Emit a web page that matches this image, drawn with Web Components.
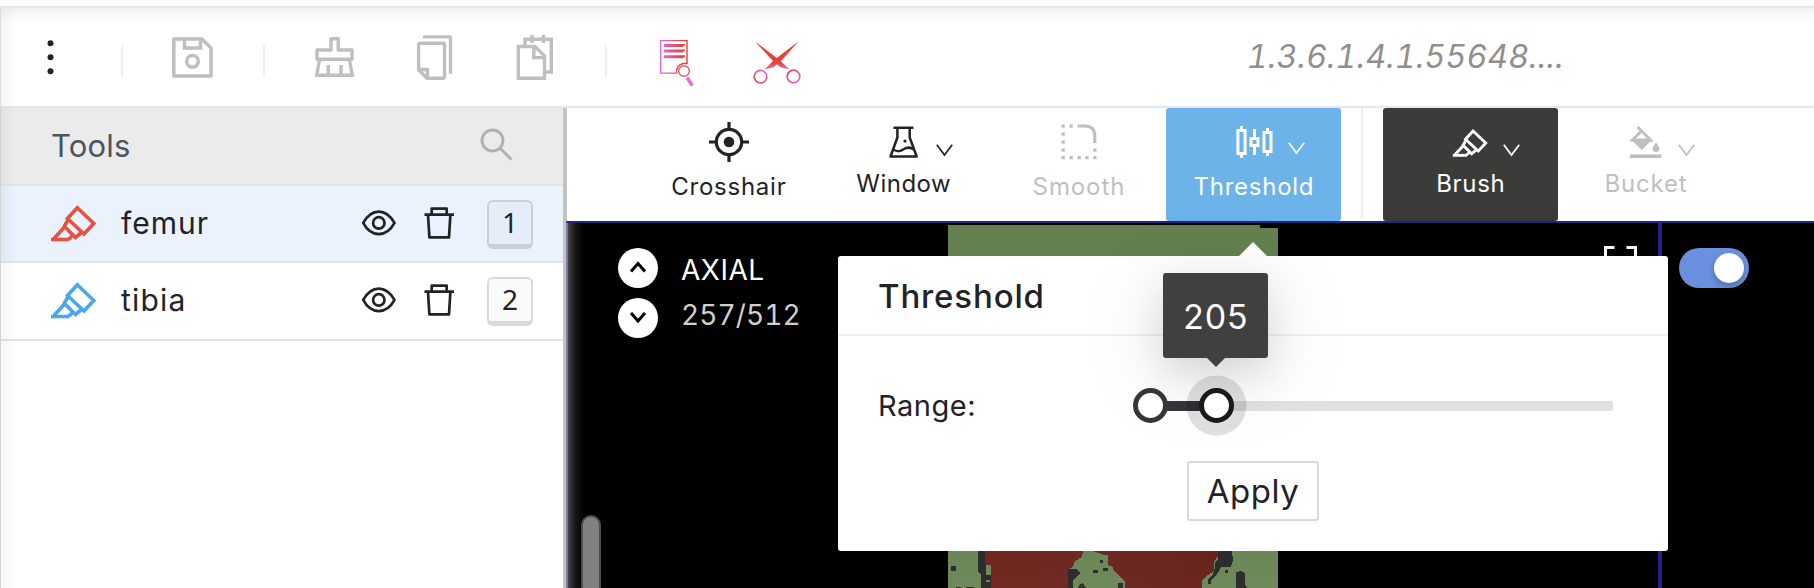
<!DOCTYPE html>
<html lang="en">
<head>
<meta charset="utf-8">
<title>Segmentation</title>
<style>
html,body{margin:0;height:588px;overflow:hidden;background:#fff}
body{font-family:Inter,"Noto Sans",sans-serif;color:#222326}
</style>
</head>
<body>
<seg-app></seg-app>
<script>
const def=(name,html,setup)=>customElements.define(name,class extends HTMLElement{
  constructor(){super();this.attachShadow({mode:'open'});}
  connectedCallback(){
    this.shadowRoot.innerHTML=typeof html==='function'?html(this):html;
    if(setup)setup(this);
  }
});

/* name: [width, height, origin x, origin y, markup] */
const pen='<path d="M77.300 207.800L93.800 223.500L84 234L67.500 218.500Z"/><path d="M68.300 219.500L64.300 226.300L75.500 237.500L81.500 232.500M64.600 227L54 238.500M72.800 235L69 239.300"/><path d="M51 239.500H69.500" />';
const icons={
  more:[8,36,47,39,'<g fill="currentColor" stroke="none"><circle cx="50.5" cy="43.300" r="3"/><circle cx="50.5" cy="57.300" r="3"/><circle cx="50.5" cy="71.300" r="3"/></g>'],
  save:[42,42,172,37,'<g stroke-width="3.500"><path d="M173.800 38.900H202L211 48V76H173.800Z" stroke-linejoin="round"/><path d="M184.500 39V48H200.500V39"/><circle cx="192.500" cy="61.300" r="5.800"/></g>'],
  clean:[42,42,314,36,'<g stroke-width="3.400"><path d="M331 50V38.800H338.200V50H352V59.300H317V50Z" stroke-linejoin="round"/><path d="M319.500 60L316.700 75.300H352.300L349.500 60M328.300 65V75M341 65V75"/></g>'],
  copy:[38,48,416,34,'<g stroke-width="3.400"><path d="M423 36.900H449A1.500 1.500 0 0 1 450.500 38.400V73.700M418.600 44.500Q418.600 43.200 420 43.200H443Q444.500 43.200 444.500 44.500V76.500Q444.500 78.200 443 78.200H427L418.600 69.800ZM419 69.500H427.400V78"/></g>'],
  paste:[40,48,515,34,'<g stroke-width="3.400"><path d="M525 46V39.300H551.300V72H545M532 35V43M543.500 35V43M518.300 46.500H535L544.500 56V78.300H518.300ZM533.800 47V57.600H544"/></g>'],
  report:[38,50,658,38,'<defs><linearGradient id="g" x1="660" x2="688" y1="0" y2="0" gradientUnits="userSpaceOnUse"><stop stop-color="#e46be0"/><stop offset=".85" stop-color="#e54136"/></linearGradient></defs><g stroke="url(#g)" stroke-width="1.400"><path d="M676.500 73.100H660.600V40.600H687V63.500H683Q676 65.500 676.500 73.500"/></g><path d="M664 45.500H683.500V45.600M664 51H683.500V51.100M664 56.800H683.500V56.900" stroke="url(#g)" stroke-width="3"/><circle cx="684" cy="71" r="5.300" stroke="#e55f74" stroke-width="1.500"/><path d="M687 77.500L692.300 85.500" stroke="#e270dc" stroke-width="3.600"/>'],
  cut:[50,46,752,40,'<defs><linearGradient id="a" x1="0" x2="0" y1="62" y2="69" gradientUnits="userSpaceOnUse"><stop stop-color="#e54136"/><stop offset="1" stop-color="#dd6fa8"/></linearGradient><linearGradient id="b" x2="1" y2="0" y1="1"><stop stop-color="#e54a36"/><stop offset="1" stop-color="#e46bd4"/></linearGradient><linearGradient id="c" y1="0" y2="1"><stop stop-color="#e54136"/><stop offset="1" stop-color="#e46bd4"/></linearGradient></defs><g fill="url(#a)" stroke="none"><path d="M755 41.500L779.500 60L789.500 69.500L780.500 67.300L772.500 60.500Z"/><path d="M798.500 41.500L774 60L764.500 69.500L773.500 67.300L781.500 60.500Z"/></g><circle cx="760.500" cy="76.700" r="6.300" stroke="url(#b)" stroke-width="1.700"/><circle cx="793.500" cy="76.500" r="6.300" stroke="url(#c)" stroke-width="1.700"/>'],
  search:[34,34,480,128,'<g stroke-width="2.800"><circle cx="492.500" cy="140.500" r="10.500"/><path d="M500.300 148.500L511.500 159.500"/></g>'],
  pen:[48,40,50,204,'<g stroke-width="3.600">'+pen+'</g>'],
  pen2:[37,30.800,50,204,'<g stroke-width="3.700">'+pen+'</g>'],
  eye:[36,28,360.500,209.600,'<g stroke-width="2.700"><path d="M362.700 223.500Q369 212.200 378.300 212.200T394 223.500Q388 234.700 378.300 234.700T362.700 223.500Z"/><circle cx="378.300" cy="223.500" r="5.700"/></g>'],
  trash:[32,34,422.500,206.300,'<g stroke-width="2.700" stroke-linejoin="round"><path d="M424 214.900H453.500M431.200 214V209H446.200V214M427.500 215L428.900 237.700H448.500L449.900 215"/></g>'],
  cross:[40,40,709,122,'<g stroke-width="3.200"><circle cx="729" cy="142" r="12.700"/><path d="M729 122V130M729 154V162M709 142H716.500M741.500 142H749"/></g><circle cx="729" cy="142" r="5.300" fill="currentColor" stroke="none"/>'],
  flask:[30,33,889,126,'<g stroke-width="2.500" stroke-linejoin="round"><path d="M893.500 127.800H913.500M897.400 128V137.500L890.500 156.500H916.700L909.700 137.500V128M893 149.500C898 152 900 151.500 904 149C908 146.500 911 147.500 914 149.500"/></g><circle cx="905" cy="141" r="1.600" fill="currentColor" stroke="none"/>'],
  smooth:[36,36,1061,124,'<path d="M1077.500 126H1085Q1094.800 126 1094.800 136V143" stroke-width="3.200"/><path fill="currentColor" stroke="none" d="M1061.500 124.500h3.300v3.300h-3.300zM1069.500 124.500h3.300v3.300h-3.300zM1061.500 132.500h3.300v3.300h-3.300zM1061.500 140.500h3.300v3.300h-3.300zM1061.500 148.500h3.300v3.300h-3.300zM1061.500 156h3.300v3.300h-3.300zM1069.500 156h3.300v3.300h-3.300zM1077.500 156h3.300v3.300h-3.300zM1085.300 156h3.300v3.300h-3.300zM1093.200 156h3.300v3.300h-3.300zM1093.200 148.500h3.300v3.300h-3.300z"/>'],
  thresh:[37,34,1235.500,125,'<g stroke-width="3"><path d="M1237.400 130.400H1244.600V153.500H1237.400ZM1241 126V130M1241 154V158M1250.500 138.500H1257.500V145.500H1250.500ZM1254 129V138M1254 146V155M1263.500 132.400H1270.500V151.500H1263.500ZM1267 128V132M1267 152V156"/></g>'],
  bucket:[32,33,1629.500,126,'<path d="M1637 127L1651.500 141.500M1641 131L1632 140H1650L1641 131" stroke-width="2.800"/><path fill="currentColor" stroke="none" d="M1630.500 139.500H1651.800L1641.300 150ZM1655.500 142.500Q1659 147 1659 149A3.500 3 0 0 1 1652 149Q1652 147 1655.500 142.500ZM1629.500 154.500H1661V158H1629.500Z"/>'],
  chev:[18,13,935.500,143.500,'<path d="M936.300 144.200L944 154.500L951.700 144.200" stroke-width="1.700"/>'],
  up:[18,14,629,261,'<path d="M631 271.500L638 263.500L645 271.500" stroke-width="3"/>'],
  down:[18,14,629,312,'<path d="M631 314L638 322L645 314" stroke-width="3"/>'],
  full:[34,34,1604,246,'<path d="M1605.500 256V247.500H1614.500M1626.500 247.500H1635.500V256M1605.500 270V278.500H1614.500M1626.500 278.500H1635.500V270" stroke-width="3"/>']
};
def('ui-icon',el=>{
  const [w,h,x,y,m]=icons[el.getAttribute('name')];
  const vb=el.getAttribute('name')==='pen2'?'50 204 48 40':`${x} ${y} ${w} ${h}`;
  return `<style>:host{display:block;width:${w}px;height:${h}px;flex:none}svg{display:block;width:100%;height:100%;overflow:visible}</style><svg viewBox="${vb}" fill="none" stroke="currentColor">${m}</svg>`;
});

def('top-bar',`<style>
:host{display:block;height:108px;box-sizing:border-box;padding-top:6px;border-bottom:2px solid #e3e8ee}
.bar{border-top:2px solid #e3e8ee;height:98px;display:grid;grid-template-columns:900px 1fr;background:linear-gradient(#f1f1f1,#f9f9f9 7px,#fff 17px)}
.icons{display:flex;color:#bfbfbf;padding-left:47px;align-items:flex-start}
.icons>*{margin-top:var(--t,29px);margin-left:var(--l,0)}
i{width:2px;height:32px;background:#f0f0f0;--t:37px}
.title{font-style:italic;font-size:32px;line-height:40px;color:#8f8f8f;letter-spacing:.13px;font-variant-numeric:tabular-nums;padding:29px 0 0 347px;white-space:nowrap}
</style><div class="bar"><div class="icons">
<ui-icon name="more" style="color:#222326;--t:31px"></ui-icon><i style="--l:66px"></i>
<ui-icon name="save" style="--l:49px"></ui-icon><i style="--l:49px"></i>
<ui-icon name="clean" style="--l:49px;--t:28px"></ui-icon>
<ui-icon name="copy" style="--l:60px;--t:26px"></ui-icon>
<ui-icon name="paste" style="--l:61px;--t:26px"></ui-icon><i style="--l:50px"></i>
<ui-icon name="report" style="--l:51px;--t:30px"></ui-icon>
<ui-icon name="cut" style="--l:56px;--t:32px"></ui-icon>
</div><div class="title">1.3.6.1.4.1.55648....</div></div>`);

def('tool-row',el=>`<style>
:host{display:flex;box-sizing:border-box;height:${el.getAttribute('h')}px;border-bottom:2px solid #e4e4e4;padding-left:49px;background:${el.hasAttribute('active')?'#eaf2fe':'#fff'}}
.pen{margin-top:18px;color:${el.getAttribute('color')}}
.name{width:240px;margin-left:23px;font-size:30px;line-height:40px;margin-top:17px;letter-spacing:${el.getAttribute('ls')}px}
.eye{margin-top:23.200px}.trash{margin:19.800px 0 0 25.500px}
kbd{margin:14px 0 0 32.500px;width:46px;height:49px;box-sizing:border-box;border:2px solid rgba(0,0,0,.13);border-bottom-width:5px;border-radius:6px;background:rgba(0,0,0,.02);font:28px/41px "Noto Sans",sans-serif;text-align:center}
</style><ui-icon class="pen" name="pen"></ui-icon><div class="name"><slot></slot></div><ui-icon class="eye" name="eye"></ui-icon><ui-icon class="trash" name="trash"></ui-icon><kbd>${el.getAttribute('key')}</kbd>`);

def('tools-panel',`<style>
:host{display:block;width:562px;position:relative;border-left:1px solid #dcdcdc;border-right:4px solid #c3c3c3}
header{display:flex;justify-content:space-between;height:76px;background:#ebebeb;border-bottom:2px solid #e4e4e4;color:#4b5563;font-size:31px;line-height:75px;padding:0 49px 0 50px;letter-spacing:.2px}
ui-icon{margin-top:20px;color:#b0b0b0}
</style><header><span>Tools</span><ui-icon name="search"></ui-icon></header>
<tool-row active h="77" color="#e5523f" key="1" ls="1">femur</tool-row><tool-row h="78" color="#4ba6ef" key="2" ls="1.2">tibia</tool-row>`);

def('tool-button',el=>{const c=el.hasAttribute('menu');const d=el.getAttribute('drop')||0;return `<style>
:host{display:flex;flex-direction:column;align-items:center;width:175px;height:113px;border-radius:3px;box-sizing:border-box}
.pic{position:relative;height:54px;display:flex;align-items:flex-start;align-self:stretch;padding-left:${el.getAttribute('x')}px}
.main{margin-top:${el.getAttribute('y')}px}
.chev{margin-top:${el.getAttribute('cy')}px;margin-left:${el.getAttribute('cx')}px}
.label{font-size:24px;line-height:30px;margin-top:${d}px;white-space:nowrap;letter-spacing:${el.getAttribute('ls')}px;margin-right:-${el.getAttribute('ls')}px}
</style><div class="pic"><ui-icon class="main" name="${el.getAttribute('icon')}"></ui-icon>${c?'<ui-icon class="chev" name="chev"></ui-icon>':''}</div><div class="label"><slot></slot></div>`});

def('tool-strip',`<style>
:host{display:flex;height:113px;padding-left:74px;background:#fff}
.off{color:#bfbfbf}.blue{background:#6cb3e9;color:#fff}.dark{background:#3b3b39;color:#fff}
i{width:2px;height:110px;background:#eee;margin:0 20px}
</style>
<tool-button icon="cross" x="68" y="14" drop="10" ls=".75">Crosshair</tool-button>
<tool-button icon="flask" x="73" y="18" menu cx="17" cy="35.5" drop="7" ls=".5">Window</tool-button>
<tool-button class="off" icon="smooth" x="70" y="16" drop="10" ls=".9">Smooth</tool-button>
<tool-button class="blue" icon="thresh" x="69.500" y="17" menu cx="15" cy="33.5" drop="10" ls=".75">Threshold</tool-button><i></i>
<tool-button class="dark" icon="pen2" x="69" y="20" menu cx="13.5" cy="35.5" drop="7" ls=".7">Brush</tool-button>
<tool-button class="off" icon="bucket" x="71.500" y="18" menu cx="16" cy="35.5" drop="7" ls=".8">Bucket</tool-button>`);

def('scan-image',`<style>:host{display:block;width:330px;height:363px}svg{display:block}</style>
<svg width="330" height="363" viewBox="948 225 330 363" shape-rendering="crispEdges">
<defs><linearGradient id="g" x2="0" y2="1"><stop stop-color="#66824f"/><stop offset="1" stop-color="#718d5d"/></linearGradient><linearGradient id="r" x2="1" y2="0"><stop stop-color="#762a22"/><stop offset=".4" stop-color="#732b25"/><stop offset="1" stop-color="#6c261f"/></linearGradient></defs>
<path fill="url(#g)" d="M948 225H1260V228H1278V588H948Z"/>
<path fill="url(#r)" d="M985 540H1218V556L1214 562V571L1208 575L1202 580V588H1125V582L1121 577L1113 570V567L1108 565V555H1104L1098 553L1093 551H1083L1082 557L1075 561L1073 567L1068 570V588H991V565H985Z"/>
<path fill="#2f2f2f" d="M978 551H985V560L986 565V575H991V588H981V575L978 572ZM950.500 565.500h5v5h-5zM986 578h4v2h-4zM1068 569H1076L1080 573L1077 576L1073 580V588H1068ZM1078 588L1080 584L1083 583L1086 588ZM1093 570h5v3h-5zM1103 568h5v3h-5zM1100 560h3v3h-3zM1118 583h5v5h-5zM1218 551H1232L1233 561L1231 567H1221L1219 571L1215 577L1211 580V584H1208V580L1213 574L1215 568V562L1218 560ZM1225 570h3v3h-3zM1236 572L1241 571L1245 573V584L1247 588H1236ZM956 587h5v1h-5zM966 587h8v1h-8z"/>
<path fill="#718d5d" d="M986 566h4v9h-4zM986 580h4v2h-4z"/>
</svg>`);

def('slice-viewport',`<style>
:host{display:block;position:relative;height:367px;background:#000;overflow:hidden}
.frame{display:grid;grid-template-columns:1094px 1fr;height:367px;box-sizing:border-box;border-top:2px solid #24248a;border-left:2px solid #4848a0}
.axial{position:relative;border-right:4px solid #24248a;box-sizing:border-box}
scan-image{position:absolute;left:380px;top:2px}
.nav{display:flex;gap:23px;padding:25px 0 0 50px}
.btns{display:flex;flex-direction:column;gap:10px}
.btns span{width:40px;height:40px;border-radius:50%;background:#fff;color:#000;display:flex;align-items:center;justify-content:center}
.txt{color:#fff;font-size:28px;line-height:45px;letter-spacing:.5px}
.txt div+div{color:#d0d0d0;letter-spacing:.1px;font-variant-numeric:tabular-nums}
.full{position:absolute;right:20.500px;top:23px;color:#fff}
.bar{position:absolute;left:13px;top:292px;width:20px;height:100px;box-sizing:border-box;border:2px solid #4d4d4d;border-radius:10px;background:#808080}
.toggle{margin:25px 0 0 17px;width:70px;height:40px;border-radius:20px;background:#6b91e1;box-sizing:border-box;padding:5px 5px 5px 35px}
.toggle b{display:block;width:30px;height:30px;border-radius:50%;background:#fff;box-shadow:0 3px 7px rgba(0,35,11,.3)}
.shade{position:absolute;left:0;top:2px;width:20px;height:365px;background:linear-gradient(90deg,rgba(190,190,190,.5),rgba(130,130,130,.42) 4px,rgba(90,90,90,.25) 9px,transparent 19px)}
</style><div class="frame"><div class="axial"><scan-image></scan-image>
<div class="nav"><div class="btns"><span><ui-icon name="up"></ui-icon></span><span><ui-icon name="down"></ui-icon></span></div><div class="txt"><div>AXIAL</div><div>257/512</div></div></div>
<ui-icon class="full" name="full"></ui-icon><div class="bar"></div></div>
<div><div class="toggle"><b></b></div></div></div><div class="shade"></div>`);

def('range-slider',`<style>
:host{display:block;position:relative;width:480px;height:36px}
.rail{position:absolute;left:18px;top:13px;right:0;height:10px;border-radius:2px;background:#e1e1e1}
.track{position:absolute;left:18px;top:13px;width:66px;height:10px;background:#35363a}
.h{position:absolute;top:0;width:35px;height:35px;box-sizing:border-box;border:5px solid #35363a;border-radius:50%;background:#fff}
.h.on{left:66.4px;border-color:#18191e;box-shadow:0 0 0 12.500px rgba(0,0,0,.12)}
.tip{position:absolute;left:30px;top:-115px;width:105px;height:85px;background:#404040;border-radius:3px;color:#fff;font-size:34px;line-height:87px;text-align:center;letter-spacing:0;font-variant-numeric:tabular-nums;box-shadow:0 15px 40px rgba(0,0,0,.13),0 15px 80px 20px rgba(0,0,0,.05)}
.tip::after{content:"";position:absolute;left:43.500px;top:85px;border:9px solid transparent;border-top-color:#404040;border-bottom:0}
</style><div class="rail"></div><div class="track"></div><div class="tip">205</div><div class="h"></div><div class="h on"></div>`);

def('threshold-popover',`<style>
:host{display:block;position:absolute;left:838px;top:256px;width:830px;height:295px;background:#fff;border-radius:3px;box-shadow:0 15px 80px rgba(0,0,0,.07)}
.arrow{position:absolute;left:400.500px;top:-14px;border:14px solid transparent;border-bottom-color:#fff;border-top:0}
h3{margin:0;height:78px;border-bottom:2px solid #f0f0f0;font-size:33px;font-weight:500;line-height:81px;padding-left:40px;letter-spacing:.85px}
.row{display:flex;padding-top:52px}
.row span{width:255px;padding-left:40px;font-size:29px;line-height:40px;margin-top:-2px;letter-spacing:.5px}
.foot{display:flex;justify-content:center;padding-top:35px}
button{box-sizing:border-box;width:132px;height:60px;border:2px solid #d9d9d9;border-radius:3px;background:#fff;color:#222326;font:33px/56px Inter,sans-serif;padding:0;letter-spacing:.5px;box-shadow:0 4px 0 rgba(0,0,0,.015)}
</style><div class="arrow"></div><h3>Threshold</h3><div class="row"><span>Range:</span><range-slider></range-slider></div><div class="foot"><button>Apply</button></div>`);

def('seg-app',`<style>
:host{display:block;width:1814px;height:588px;position:relative;overflow:hidden}
main{display:grid;grid-template-columns:567px 1fr;height:480px}
section{min-width:0}slice-viewport{margin-left:-1px}
.edge{position:absolute;left:0;top:8px;width:16px;height:580px;background:linear-gradient(90deg,rgba(0,0,0,.045),transparent)}
.edge::before{content:"";display:block;width:1px;height:100px;background:#dcdcdc}
</style><top-bar></top-bar><main><tools-panel></tools-panel><section><tool-strip></tool-strip><slice-viewport></slice-viewport></section></main><threshold-popover></threshold-popover><div class="edge"></div>`);
</script>
</body>
</html>
